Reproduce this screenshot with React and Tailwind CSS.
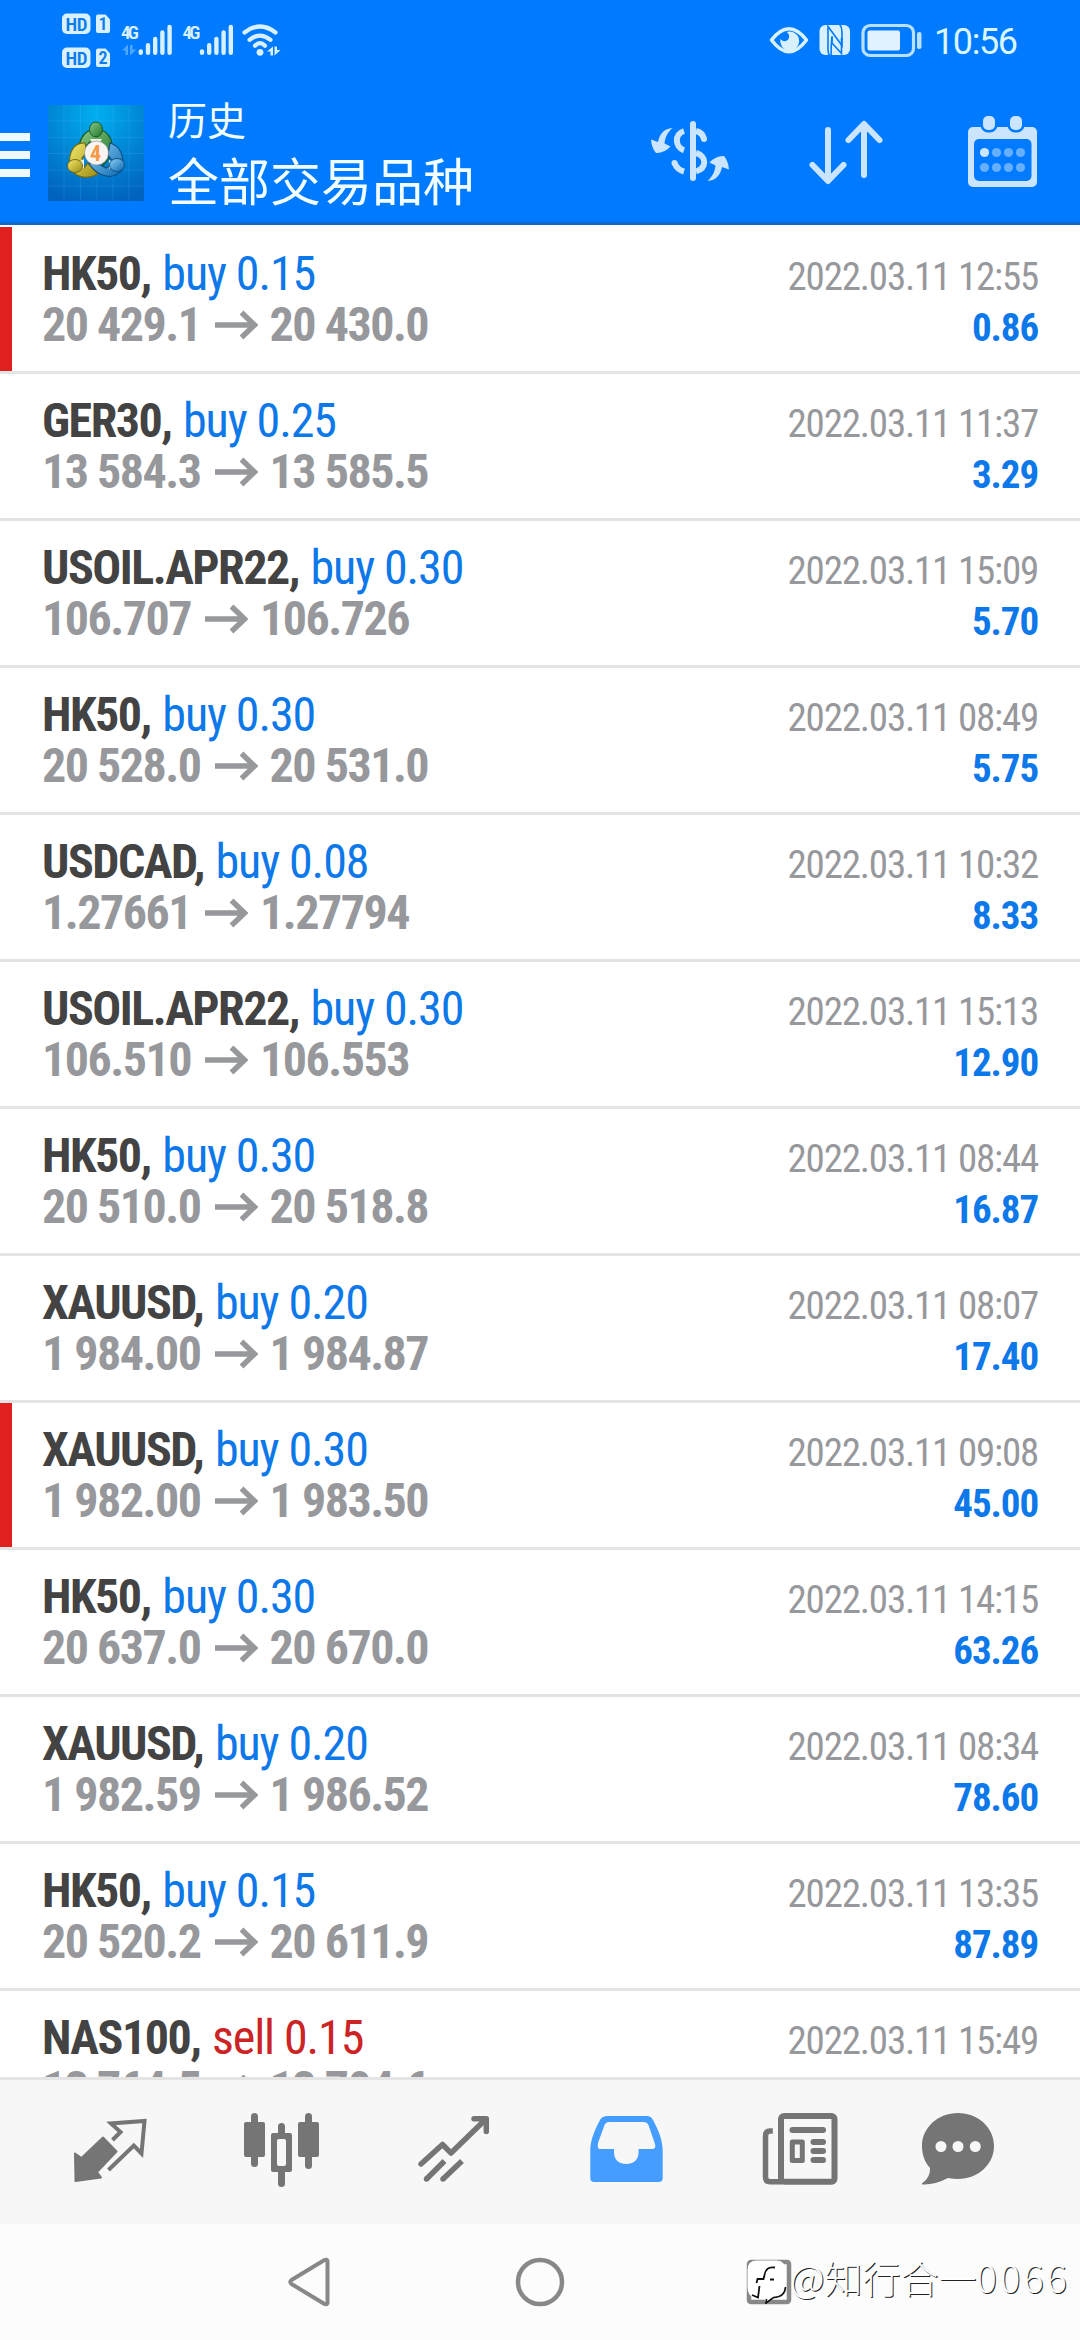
import React from "react";

const deals = [
  { symbol: "HK50", side: "buy", volume: "0.15", open: "20 429.1", close: "20 430.0", time: "2022.03.11 12:55", profit: "0.86", marked: true },
  { symbol: "GER30", side: "buy", volume: "0.25", open: "13 584.3", close: "13 585.5", time: "2022.03.11 11:37", profit: "3.29" },
  { symbol: "USOIL.APR22", side: "buy", volume: "0.30", open: "106.707", close: "106.726", time: "2022.03.11 15:09", profit: "5.70" },
  { symbol: "HK50", side: "buy", volume: "0.30", open: "20 528.0", close: "20 531.0", time: "2022.03.11 08:49", profit: "5.75" },
  { symbol: "USDCAD", side: "buy", volume: "0.08", open: "1.27661", close: "1.27794", time: "2022.03.11 10:32", profit: "8.33" },
  { symbol: "USOIL.APR22", side: "buy", volume: "0.30", open: "106.510", close: "106.553", time: "2022.03.11 15:13", profit: "12.90" },
  { symbol: "HK50", side: "buy", volume: "0.30", open: "20 510.0", close: "20 518.8", time: "2022.03.11 08:44", profit: "16.87" },
  { symbol: "XAUUSD", side: "buy", volume: "0.20", open: "1 984.00", close: "1 984.87", time: "2022.03.11 08:07", profit: "17.40" },
  { symbol: "XAUUSD", side: "buy", volume: "0.30", open: "1 982.00", close: "1 983.50", time: "2022.03.11 09:08", profit: "45.00", marked: true },
  { symbol: "HK50", side: "buy", volume: "0.30", open: "20 637.0", close: "20 670.0", time: "2022.03.11 14:15", profit: "63.26" },
  { symbol: "XAUUSD", side: "buy", volume: "0.20", open: "1 982.59", close: "1 986.52", time: "2022.03.11 08:34", profit: "78.60" },
  { symbol: "HK50", side: "buy", volume: "0.15", open: "20 520.2", close: "20 611.9", time: "2022.03.11 13:35", profit: "87.89" },
  { symbol: "NAS100", side: "sell", volume: "0.15", open: "13 764.5", close: "13 704.6", time: "2022.03.11 15:49", profit: "89.85" },
];

const SignalBars = ({ x }) => (
  <g stroke="#d9f1ff" strokeWidth="4.4" strokeLinecap="round">
    <path d={`M${x} 51.5V52.8M${x + 7.2} 45.2V52.8M${x + 14.4} 39V52.8M${x + 21.6} 32.5V52.8M${x + 28.8} 27V52.8`} />
  </g>
);

const StatusBar = () => (
  <div className="flex h-[72px] justify-between px-[60px]">
    <svg width="230" height="72" viewBox="60 0 230 72" className="font-['Roboto_Condensed',sans-serif]">
      <g fill="#d9f1ff">
        <rect x="62" y="13.5" width="28.5" height="20.5" rx="5" />
        <rect x="62" y="47.5" width="28.5" height="20.5" rx="5" />
        <path d="M98 14.5H105.5L110 19.5V31a2 2 0 0 1-2 2H98a2 2 0 0 1-2-2V16.5a2 2 0 0 1 2-2Z" />
        <path d="M98 48.5H105.5L110 53.5V65a2 2 0 0 1-2 2H98a2 2 0 0 1-2-2V50.5a2 2 0 0 1 2-2Z" />
        <text x="121" y="39" fontSize="19" fontWeight="600" textLength="18">4G</text>
        <text x="182.5" y="39" fontSize="19" fontWeight="600" textLength="18">4G</text>
      </g>
      <g fill="#0b7dec" fontWeight="600" fontSize="19">
        <text x="65.5" y="30.5" textLength="22">HD</text>
        <text x="65.5" y="64.5" textLength="22">HD</text>
        <text x="98.5" y="30" fontSize="18">1</text>
        <text x="98.5" y="64" fontSize="18">2</text>
      </g>
      <path d="M122 50.5L128 44.5V55H125.5V50.5ZM130 45H132.5V49.5H136.5L130 55.5Z" fill="#4da6ff" />
      <SignalBars x={140.8} />
      <SignalBars x={202} />
      <g fill="none" stroke="#d9f1ff" strokeWidth="4.2" strokeLinecap="round">
        <path d="M244.5 32.5Q260 20.5 275.5 32.5" />
        <path d="M249.5 39.8Q260 31.3 270.500 39.8" />
        <path d="M255 45.8Q260 40.5 265 45.8" />
      </g>
      <circle cx="260" cy="52.3" r="3.4" fill="#d9f1ff" />
      <path d="M267 51.5L273 46.5V55.5H270.5V51.5ZM274.5 46.5H277V50H280.5L274.5 55.5Z" fill="#d9f1ff" />
    </svg>
    <svg width="260" height="72" viewBox="760 0 260 72" className="font-['Roboto',sans-serif]">
      <path d="M771.5 40Q789 17.5 806.5 40Q789 63.5 771.5 40Z" fill="none" stroke="#d9f1ff" strokeWidth="3.6" strokeLinejoin="round" />
      <path d="M789 31.5A9.5 9.5 0 1 1 780.5 38.5C781.5 41 784.5 42 787 40.5C790 38.5 790 34 786.5 32Z" fill="#d9f1ff" />
      <rect x="819.5" y="25" width="30.500" height="30" rx="6" fill="#d9f1ff" />
      <g fill="none" stroke="#007aff" strokeWidth="1.6">
        <path d="M830 56Q828 54 828 50V26.500L842 45.500V38" />
        <path d="M839.500 24Q842 27 842 32V40" />
        <path d="M832 36.500V43L841.500 53.500V38" />
        <path d="M832 36.500Q830.500 52 831.500 56" />
      </g>
      <rect x="863" y="25.5" width="50.500" height="30" rx="7" fill="none" stroke="#b9e0ff" strokeWidth="3.2" />
      <rect x="867.5" y="30.5" width="32.5" height="20" rx="2" fill="#e2f1ff" />
      <rect x="917" y="32" width="4.5" height="17" rx="2" fill="#b9e0ff" />
      <text x="934" y="54.3" fontSize="36" fill="#d9f6ff" textLength="84">10:56</text>
    </svg>
  </div>
);

// MetaTrader 4 logo
const AppLogo = () => (
  <svg width="96" height="96" viewBox="0 0 96 96">
    <defs>
      <radialGradient id="bg" cx="0.5" cy="0.1" r="0.95">
        <stop offset="0" stopColor="#00aff0" />
        <stop offset="0.45" stopColor="#008ad8" />
        <stop offset="1" stopColor="#0062bd" />
      </radialGradient>
      <linearGradient id="green" x1="0" y1="0" x2="1" y2="1">
        <stop offset="0" stopColor="#8fca86" />
        <stop offset="1" stopColor="#1b742b" />
      </linearGradient>
      <linearGradient id="yellow" x1="0" y1="0" x2="1" y2="1">
        <stop offset="0" stopColor="#f5ea6d" />
        <stop offset="1" stopColor="#9b8d12" />
      </linearGradient>
      <linearGradient id="blue" x1="0" y1="0" x2="1" y2="1">
        <stop offset="0" stopColor="#8fd3f5" />
        <stop offset="1" stopColor="#0a66b0" />
      </linearGradient>
    </defs>
    <rect width="96" height="96" fill="url(#bg)" />
    <path d="M16 0V96M32.5 0V96M49 0V96M65 0V96M81 0V96M0 16H96M0 32.5H96M0 48.5H96M0 65H96M0 81H96" stroke="#7cd0ff" strokeOpacity="0.14" />
    <path d="M32 47C29 33 39 24 48 24S68 33 63 50L55 61L55 44L42 37Z" fill="url(#green)" stroke="#145a28" strokeWidth="1.2" />
    <path d="M37 38C25 37 20 49 22 62C27 73 39 75 50 69L40 58L36 63L34 53L39 47Z" fill="url(#yellow)" stroke="#716b16" strokeWidth="1.2" />
    <path d="M62 38C73 41 77 53 74 65C66 75 51 73 41 59L47 57L58 63L66 58L60 50Z" fill="url(#blue)" stroke="#0c4e86" strokeWidth="1.2" />
    <path d="M42 34H54L51 39H45ZM29 58L36 54V64ZM68 58L61 55V64Z" fill="#e9f3e0" />
    <ellipse cx="48" cy="24.5" rx="6.5" ry="7.5" fill="url(#green)" stroke="#145a28" />
    <ellipse cx="27" cy="61" rx="7.5" ry="6.5" fill="url(#yellow)" stroke="#716b16" />
    <ellipse cx="69" cy="60" rx="7.5" ry="6.5" fill="url(#blue)" stroke="#0c4e86" />
    <circle cx="48.5" cy="48" r="12" fill="#f7f5f3" stroke="#777" strokeWidth="0.5" />
    <text x="47.5" y="56" fontSize="22" fontWeight="700" textAnchor="middle" fill="#f59a4a" className="font-['Roboto_Condensed',sans-serif]">4</text>
  </svg>
);

const Header = () => (
  <header className="flex h-[153px] items-start border-b-[3px] border-[#1068cc]">
    <div className="mt-[61px] flex w-[30px] flex-col gap-[10px]">
      <div className="h-2 bg-[#eefaff]" />
      <div className="h-2 bg-[#eefaff]" />
      <div className="h-2 bg-[#eefaff]" />
    </div>
    <div className="mt-[33px] ml-[18px]">
      <AppLogo />
    </div>
    <div className="mt-[18px] ml-[24px] flex-1 font-['Noto_Sans_CJK_SC',sans-serif] text-[#f2fdff]">
      <div className="text-[39px] leading-[56px]">历史</div>
      <div className="text-[51px] leading-[66px]">全部交易品种</div>
    </div>
    <svg width="400" height="96" viewBox="646 105 400 96" className="mt-[33px] mr-[34px]">
      <g fill="#cce5ff">
        <path d="M672.5 128C664 128.5 659.5 134 658 142L651 139.5C651.5 146 653.5 150 656 153Q664 153.5 670.500 146.500L664.500 143.500C665 137 668 132 672.5 128Z" />
        <path d="M672.5 128C664 128.5 659.5 134 658 142L651 139.5C651.5 146 653.5 150 656 153Q664 153.5 670.500 146.500L664.500 143.500C665 137 668 132 672.5 128Z" transform="rotate(180 690 154.5)" />
      </g>
      <g fill="none" stroke="#cce5ff" strokeWidth="6">
        <path d="M693 124V178" strokeLinecap="round" />
        <path d="M684 131C674.5 134 674.5 147 684 150.3" />
        <path d="M674.5 163Q677 169.5 684 171.5" />
        <path d="M674.5 163V163.01" strokeLinecap="round" />
        <path d="M696 131Q702.5 132.5 704 139" />
        <path d="M704 139V139.01" strokeLinecap="round" />
        <path d="M696 153C707 156 707 168 696 171.5" />
      </g>
      <g fill="none" stroke="#cce5ff" strokeWidth="6" strokeLinecap="round" strokeLinejoin="round">
        <path d="M828 130V180M812.5 165L828 181L843.5 165" />
        <path d="M864 175V125M848.5 140L864 124L879.5 140" />
      </g>
      <rect x="968" y="127" width="69" height="60" rx="5" fill="#cce5ff" />
      <rect x="974" y="139" width="57.5" height="42" rx="5" fill="#007aff" />
      <g fill="#cce5ff" stroke="#007aff" strokeWidth="5" paintOrder="stroke">
        <rect x="983" y="116" width="12" height="14" rx="5" />
        <rect x="1010" y="116" width="12" height="14" rx="5" />
      </g>
      <g fill="#66afff">
        <circle cx="984.5" cy="152.5" r="4.6" fill="#cce5ff" />
        <circle cx="996.5" cy="152.5" r="4.6" />
        <circle cx="1008.5" cy="152.5" r="4.6" />
        <circle cx="1020.5" cy="152.5" r="4.6" />
        <circle cx="984.5" cy="167.5" r="4.6" />
        <circle cx="996.5" cy="167.5" r="4.6" />
        <circle cx="1008.5" cy="167.5" r="4.6" />
        <circle cx="1020.5" cy="167.5" r="4.6" />
      </g>
    </svg>
  </header>
);

const DealRow = ({ deal }) => (
  <div className="flex h-[147px] shrink-0 border-b-[3px] border-[#e4e4e4]">
    <div className={`w-3 shrink-0 ${deal.marked ? "bg-[#e11f1f]" : ""}`} />
    <div className="flex-1 pt-[21px] pl-[30px] text-[48px] leading-[51px] whitespace-nowrap">
      <div>
        <span className="mr-[2px] font-bold tracking-[-1.5px] text-[#434343]">{deal.symbol}, </span>
        <span className={`tracking-[-1.1px] ${deal.side === "buy" ? "text-[#0d78e9]" : "text-[#cc2325]"}`}>
          {deal.side} {deal.volume}
        </span>
      </div>
      <div className="flex items-center font-bold tracking-[-1.5px] text-[#97989c]">
        <span>{deal.open}</span>
        <svg width="43" height="30" viewBox="0 0 43 30" className="mr-[12px] ml-[14px]">
          <path d="M0 15H39M26.5 2.5L39.5 15L26.5 27.5" fill="none" stroke="#97989c" strokeWidth="5.5" />
        </svg>
        <span>{deal.close}</span>
      </div>
    </div>
    <div className="pt-[25px] pr-[42px] text-right text-[39px] leading-[51px]">
      <div className="tracking-[-1.2px] text-[#97989c]">{deal.time}</div>
      <div className="font-bold tracking-[-1.1px] text-[#0d78e9]">{deal.profit}</div>
    </div>
  </div>
);

const TabBar = () => (
  <nav className="flex h-[147px] shrink-0 items-center border-t-[3px] border-[#e4e4e4] bg-[#f7f7f8] pl-6">
    <div className="flex w-[172px] justify-center">
      <svg width="100" height="110" viewBox="60 2097 100 110">
        <path d="M75 2153.5L81.5 2158L103 2137.5L116.5 2151.5L97 2172L101 2177.5L75.5 2181Z" fill="#757575" stroke="#757575" strokeWidth="2" strokeLinejoin="round" />
        <path d="M112.5 2140L120.5 2132L111 2123.5L144.5 2121L141.5 2153.5L133.8 2145.5L108.5 2170" fill="none" stroke="#757575" strokeWidth="4" />
      </svg>
    </div>
    <div className="flex w-[172px] justify-center">
      <svg width="100" height="110" viewBox="232 2097 100 110">
        <g fill="#757575">
          <rect x="244" y="2122" width="21" height="35" rx="2" />
          <rect x="251" y="2113" width="7" height="54" rx="3.5" />
          <rect x="298" y="2122" width="21" height="35" rx="2" />
          <rect x="305" y="2113" width="7" height="56" rx="3.5" />
          <rect x="271" y="2133" width="21" height="39" rx="2" />
          <rect x="278" y="2123" width="7" height="64" rx="3.5" />
        </g>
        <rect x="277" y="2139" width="9" height="27" rx="2" fill="#f7f7f8" />
      </svg>
    </div>
    <div className="flex w-[172px] justify-center">
      <svg width="100" height="110" viewBox="404 2097 100 110">
        <g fill="none" stroke="#757575" strokeWidth="5.5">
          <path d="M421 2164L442.5 2144.5L451 2153L485 2120" strokeLinejoin="round" strokeLinecap="round" />
          <path d="M474 2118.8H486.3V2131.5" strokeLinejoin="round" strokeLinecap="round" />
          <path d="M426.5 2179L444.5 2161M443 2179L462 2161" />
          <path d="M426.5 2179V2179.01M443 2179V2179.01" strokeLinecap="round" />
        </g>
      </svg>
    </div>
    <div className="flex w-[172px] justify-center">
      <svg width="100" height="110" viewBox="576 2097 100 110">
        <path
          fill="#449dff"
          fillRule="evenodd"
          d="M608 2116H647Q651 2116 653 2120C660 2133 662.7 2142 662.7 2151V2178Q662.7 2182 658.7 2182H594.3Q590.3 2182 590.3 2178V2151C590.3 2142 593 2133 600 2120Q602 2116 608 2116ZM609 2122Q606 2122 604.5 2125L598 2143Q597 2149 600 2149H614V2152C614 2160 619 2164 626.3 2164S638.6 2160 638.6 2152V2149H652Q656.5 2149 655 2144L648.5 2125Q647 2122 643.5 2122Z"
        />
      </svg>
    </div>
    <div className="flex w-[172px] justify-center">
      <svg width="100" height="110" viewBox="748 2097 100 110">
        <g fill="none" stroke="#757575" strokeWidth="6">
          <rect x="781" y="2116" width="53.5" height="65.8" rx="3" />
          <path d="M772.8 2131H770Q765.5 2131 765.5 2136V2177Q765.5 2181.8 770 2181.8H782" strokeWidth="5.5" />
          <path d="M792.5 2130H823" strokeLinecap="round" />
          <rect x="792.3" y="2142" width="10" height="18.5" strokeWidth="5" strokeLinejoin="round" />
          <path d="M813.5 2142H823M813.5 2151H823M813.5 2160H823" strokeLinecap="round" />
        </g>
      </svg>
    </div>
    <div className="flex w-[148px] justify-center">
      <svg width="100" height="110" viewBox="908 2097 100 110">
        <path d="M958 2113C978 2113 994 2127.5 994 2146S978 2179 958 2179Q953 2179 948 2178Q935 2185 922.5 2184.5Q921 2184 923 2182.5Q930.5 2177 930 2168C925 2162.5 922 2155 922 2146C922 2127.5 938 2113 958 2113Z" fill="#757575" />
        <g fill="#f7f7f8">
          <circle cx="941" cy="2146.5" r="5.5" />
          <circle cx="958" cy="2146.5" r="5.5" />
          <circle cx="975.3" cy="2146.5" r="5.5" />
        </g>
      </svg>
    </div>
  </nav>
);

const SystemNav = () => (
  <div className="relative flex flex-1 items-center justify-between bg-[#fcfcfc] px-[286px]">
    <svg width="48" height="52" viewBox="286 2256 48 52">
      <path d="M327.5 2261V2303Q327 2305 324.5 2304L291.5 2284Q289 2282 291.5 2280L324.5 2260Q327 2259 327.5 2261Z" fill="none" stroke="#888" strokeWidth="4" strokeLinejoin="round" />
    </svg>
    <svg width="52" height="52" viewBox="514 2256 52 52">
      <circle cx="540" cy="2282" r="22" fill="none" stroke="#888" strokeWidth="4.5" />
    </svg>
    <svg width="48" height="52" viewBox="746 2256 48 52">
      <rect x="749" y="2262" width="40" height="40" rx="2" fill="none" stroke="#888" strokeWidth="4.5" />
    </svg>
    <div className="absolute top-[34px] left-[746px] flex items-start">
      <svg width="42" height="46" viewBox="746 2258 42 46">
        <path d="M757 2260.5H776Q785.5 2260.5 785.5 2270V2286Q785.5 2297 774 2297.5L766 2303L764 2298H757Q747.5 2298 747.5 2286V2270Q747.5 2260.5 757 2260.5Z" fill="#fff" />
        <path d="M775 2267.5Q766 2266 764.5 2275L763.5 2279H757.500L756.500 2283M770 2279.500H774M759.500 2286L758 2297.500L752 2295" fill="none" stroke="#111" strokeWidth="1.8" />
        <path d="M785.5 2287Q785 2297 773.5 2297.5L766 2303L766.5 2299" fill="none" stroke="#111" strokeWidth="1.6" />
      </svg>
      <div className="-mt-[4px] ml-[2px] font-['Noto_Sans_CJK_SC',sans-serif] text-[38px] leading-[46px] font-light whitespace-nowrap text-white [text-shadow:1px_1px_0_#222]">
        @知行合一<span className="tracking-[3px]">0066</span>
      </div>
    </div>
  </div>
);

export default function App() {
  return (
    <div className="flex h-[2340px] w-[1080px] flex-col overflow-hidden bg-white font-['Roboto_Condensed',sans-serif]">
      <div className="shrink-0 bg-[#007aff]">
        <StatusBar />
        <Header />
      </div>
      <main className="flex h-[1852px] shrink-0 flex-col overflow-hidden pt-[2px]">
        {deals.map((deal, i) => (
          <DealRow key={i} deal={deal} />
        ))}
      </main>
      <TabBar />
      <SystemNav />
    </div>
  );
}
